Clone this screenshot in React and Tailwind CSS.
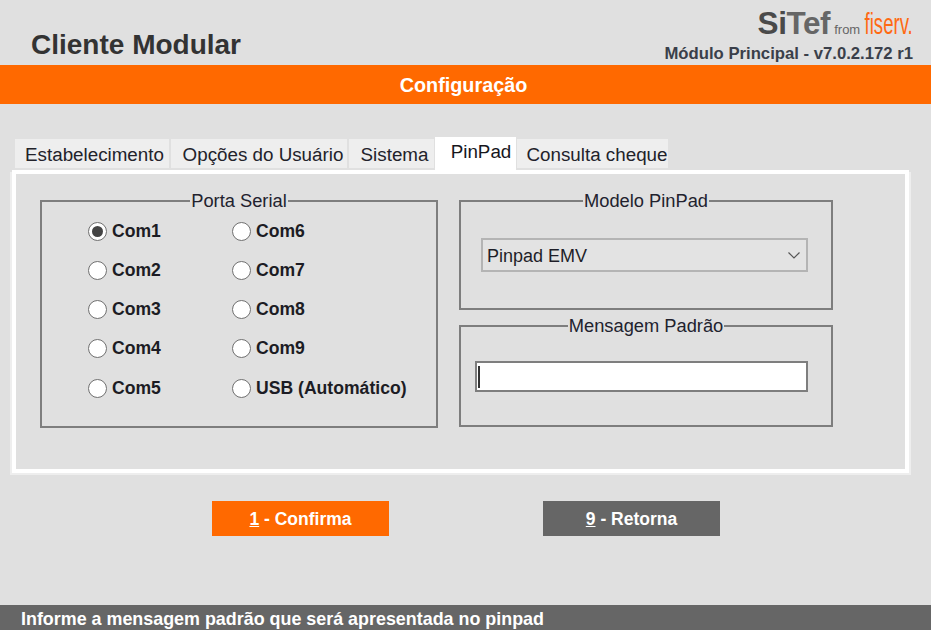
const FONT = "font-['Liberation_Sans',Arial,sans-serif]";

const LEFT_PORTS = ["Com1", "Com2", "Com3", "Com4", "Com5"];
const RIGHT_PORTS = ["Com6", "Com7", "Com8", "Com9", "USB (Automático)"];

function Radio({ label, checked }) {
  return (
    <label className="flex items-center h-[39px] last:mt-[1px]">
      <span className="w-[19px] h-[19px] rounded-full border-[1.5px] border-[#707070] bg-white flex items-center justify-center shrink-0">
        {checked && <span className="w-[11px] h-[11px] rounded-full bg-[#444]" />}
      </span>
      <span className="ml-[5px] text-[17.6px] font-bold text-[#1c1c24] whitespace-nowrap">{label}</span>
    </label>
  );
}

function Tab({ label, className, active }) {
  if (active) {
    return (
      <div className={`h-[33px] bg-white flex items-start justify-center pt-[1px] text-[#16161c] ${className}`}>
        {label}
      </div>
    );
  }
  return (
    <div className={`h-[29px] mb-[2px] bg-[#eeeeee] flex items-center justify-center pt-[4px] text-[#22222a] ${className}`}>
      {label}
    </div>
  );
}

function Group({ title, className, children }) {
  return (
    <fieldset className={`border-2 border-[#7e7e7e] min-w-0 ${className}`}>
      <legend className="mx-auto px-[1px] text-[18.3px] leading-[18px] text-[#22222e]">{title}</legend>
      {children}
    </fieldset>
  );
}

export default function App() {
  return (
    <div className={`${FONT} w-[931px] h-[630px] bg-[#e0e0e0] flex flex-col overflow-hidden`}>
      <header className="h-[65px] flex justify-between shrink-0">
        <h1 className="ml-[31px] mt-[29px] text-[28px] leading-[32px] font-bold text-[#333]">Cliente Modular</h1>
        <div className="mr-[18px] flex flex-col items-end">
          <div className="flex items-baseline mt-[5px] h-[31px]">
            <span className="text-[31.5px] leading-[36px] font-bold tracking-[-0.4px] text-[#4a4a4a]">
              Si<span className="text-[#666]">Tef</span>
            </span>
            <span className="ml-[4px] text-[13px] text-[#666]">from</span>
            <span className="-ml-[25px] text-[30px] leading-[30px] text-[#ff6a13] origin-right scale-x-[.62]">fiserv.</span>
          </div>
          <div className="mt-[9px] text-[16.7px] leading-[17px] font-bold text-[#3a3f4a] whitespace-nowrap">
            Módulo Principal - v7.0.2.172 r1
          </div>
        </div>
      </header>

      <div className="h-[39px] shrink-0 bg-[#ff6900] flex items-center justify-center pt-[2px] pr-[4px] text-white font-bold text-[19.8px]">
        Configuração
      </div>

      <div className="mt-[33px] ml-[15px] flex items-end text-[18.8px] h-[33px] shrink-0">
        <Tab label="Estabelecimento" className="w-[154px] pl-[5px]" />
        <Tab label="Opções do Usuário" className="w-[176px] ml-[2px] pl-[8px]" />
        <Tab label="Sistema" className="w-[85px] ml-[2px] pl-[6px]" />
        <Tab label="PinPad" className="w-[81px] ml-[1px] pl-[11px]" active />
        <Tab label="Consulta cheque" className="w-[151px] ml-[1px] pl-[9px]" />
      </div>

      <main className="ml-[12px] w-[897px] h-[303px] shrink-0 border-[4px] border-white shadow-[2px_2px_0_#eeeeee,-2px_2px_0_#eeeeee] pt-[18px] pl-[24px] flex items-start gap-[21px]">
        <Group title="Porta Serial" className="w-[398px] h-[236px]">
          <div className="flex pl-[46px] pt-[2px]">
            <div className="w-[144px]">
              {LEFT_PORTS.map((p, i) => <Radio key={p} label={p} checked={i === 0} />)}
            </div>
            <div>
              {RIGHT_PORTS.map((p) => <Radio key={p} label={p} />)}
            </div>
          </div>
        </Group>

        <div className="flex flex-col gap-[7px]">
          <Group title="Modelo PinPad" className="w-[374px] h-[118px]">
            <div className="ml-[20px] mt-[28px] w-[327px] h-[34px] border-2 border-[#b4b4b4] bg-[#e3e3e3] flex items-center justify-between pl-[4px] pr-[4px] text-[18px] text-[#1e1e28]">
              <span className="pt-[2px]">Pinpad EMV</span>
              <svg width="16" height="16" viewBox="0 0 16 16" fill="none" stroke="#555" strokeWidth="1.2">
                <path d="M2.5 5.5 8 11l5.5-5.5" />
              </svg>
            </div>
          </Group>
          <Group title="Mensagem Padrão" className="w-[374px] h-[110px]">
            <div className="ml-[14px] mt-[26px] w-[333px] h-[31px] border-2 border-[#7e7e7e] bg-white flex items-center pl-[1px]">
              <span className="w-[2px] h-[22px] bg-[#333]" />
            </div>
          </Group>
        </div>
      </main>

      <div className="mt-[28px] ml-[212px] flex gap-[154px] shrink-0">
        <button className="w-[177px] h-[35px] bg-[#ff6900] text-white font-bold text-[17.5px] pt-[1px]">
          <span className="underline">1</span> - Confirma
        </button>
        <button className="w-[177px] h-[35px] bg-[#666666] text-white font-bold text-[17.5px] pt-[1px]">
          <span className="underline">9</span> - Retorna
        </button>
      </div>

      <footer className="mt-auto h-[25px] shrink-0 bg-[#666666] text-white font-bold text-[17.9px] pl-[21px] pt-[3px] flex items-center whitespace-nowrap">
        Informe a mensagem padrão que será apresentada no pinpad
      </footer>
    </div>
  );
}
